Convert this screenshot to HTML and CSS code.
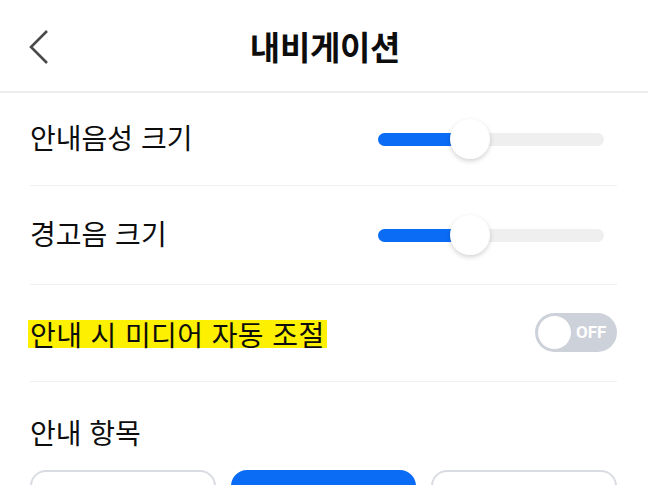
FILE: index.html
```html
<!DOCTYPE html>
<html lang="ko">
<head>
<meta charset="utf-8">
<link rel="stylesheet" href="styles.css">
</head>
<body>
<div class="screen">
  <header class="header">
    <svg class="back" width="22" height="36" viewBox="0 0 22 36"><path d="M19 2 L3 18 L19 34" fill="none" stroke="#4a4a4a" stroke-width="2.6"/></svg>
    <h1 class="title">내비게이션</h1>
  </header>
  <div class="list">
    <div class="row row-first">
      <span class="label">안내음성 크기</span>
      <div class="slider"><div class="fill" style="width:92px"></div><div class="thumb" style="left:72px"></div></div>
    </div>
    <div class="row">
      <span class="label">경고음 크기</span>
      <div class="slider"><div class="fill" style="width:92px"></div><div class="thumb" style="left:72px"></div></div>
    </div>
    <div class="row row-third">
      <span class="label hl">안내 시 미디어 자동 조절</span>
      <div class="toggle"><div class="knob"></div><span class="off">OFF</span></div>
    </div>
    <div class="section">
      <span class="label">안내 항목</span>
      <div class="buttons">
        <div class="btn"></div>
        <div class="btn active"></div>
        <div class="btn"></div>
      </div>
    </div>
  </div>
</div>
</body>
</html>
```
FILE: styles.css
```css
* { box-sizing: border-box; }
html, body { margin: 0; padding: 0; background: #fff; }
body { font-family: "Noto Sans CJK KR", "Noto Sans", sans-serif; color: #0d0d0d; overflow: hidden; }
.screen { width: 648px; height: 485px; overflow: hidden; }
.header {
  height: 93px;
  border-bottom: 2px solid #ececec;
  display: flex;
  align-items: center;
  justify-content: center;
  position: relative;
}
.back { position: absolute; left: 28px; top: 29px; }
.title { margin: 0; font-size: 33px; font-weight: 700; letter-spacing: -0.3px; line-height: 1; padding-top: 2px; padding-left: 2px; }
.list { padding: 0 31px 0 30px; }
.row {
  height: 99px;
  border-bottom: 1px solid #f0f0f0;
  display: flex;
  align-items: center;
  justify-content: space-between;
}
.row-first { height: 93px; }
.row-third { height: 97px; }
.label { font-size: 28px; line-height: 1; letter-spacing: 0; margin-top: -4px; }
.hl { background: #fdf000; padding: 0 2px 0 2px; margin-left: -2px; margin-top: 1px; height: 28px; line-height: 28px; letter-spacing: 0.4px; }
.slider {
  width: 226px;
  height: 13px;
  border-radius: 7px;
  background: #efefef;
  margin-right: 13px;
  position: relative;
}
.fill { height: 13px; border-radius: 7px; background: #0a6cf5; }
.thumb {
  position: absolute;
  top: -14px;
  width: 40px;
  height: 40px;
  border-radius: 50%;
  background: #fff;
  box-shadow: 0 2px 5px rgba(0,0,0,0.18);
}
.toggle {
  width: 82px;
  height: 39px;
  border-radius: 20px;
  background: #cdd1da;
  display: flex;
  align-items: center;
  padding-left: 3px;
  gap: 5px;
  margin-top: -2px;
}
.knob { width: 33px; height: 33px; border-radius: 50%; background: #fff; }
.off { color: #fff; font-family: "Roboto", sans-serif; font-weight: 700; font-size: 17px; letter-spacing: 0; }
.section { padding-top: 36px; }
.section .label { display: block; margin-top: 0; }
.buttons { display: flex; gap: 15px; margin-top: 24px; }
.btn {
  flex: 1;
  height: 60px;
  border: 2px solid #d9dce2;
  border-radius: 16px;
  background: #fff;
}
.btn.active { background: #0a6cf5; border-color: #0a6cf5; }
```
